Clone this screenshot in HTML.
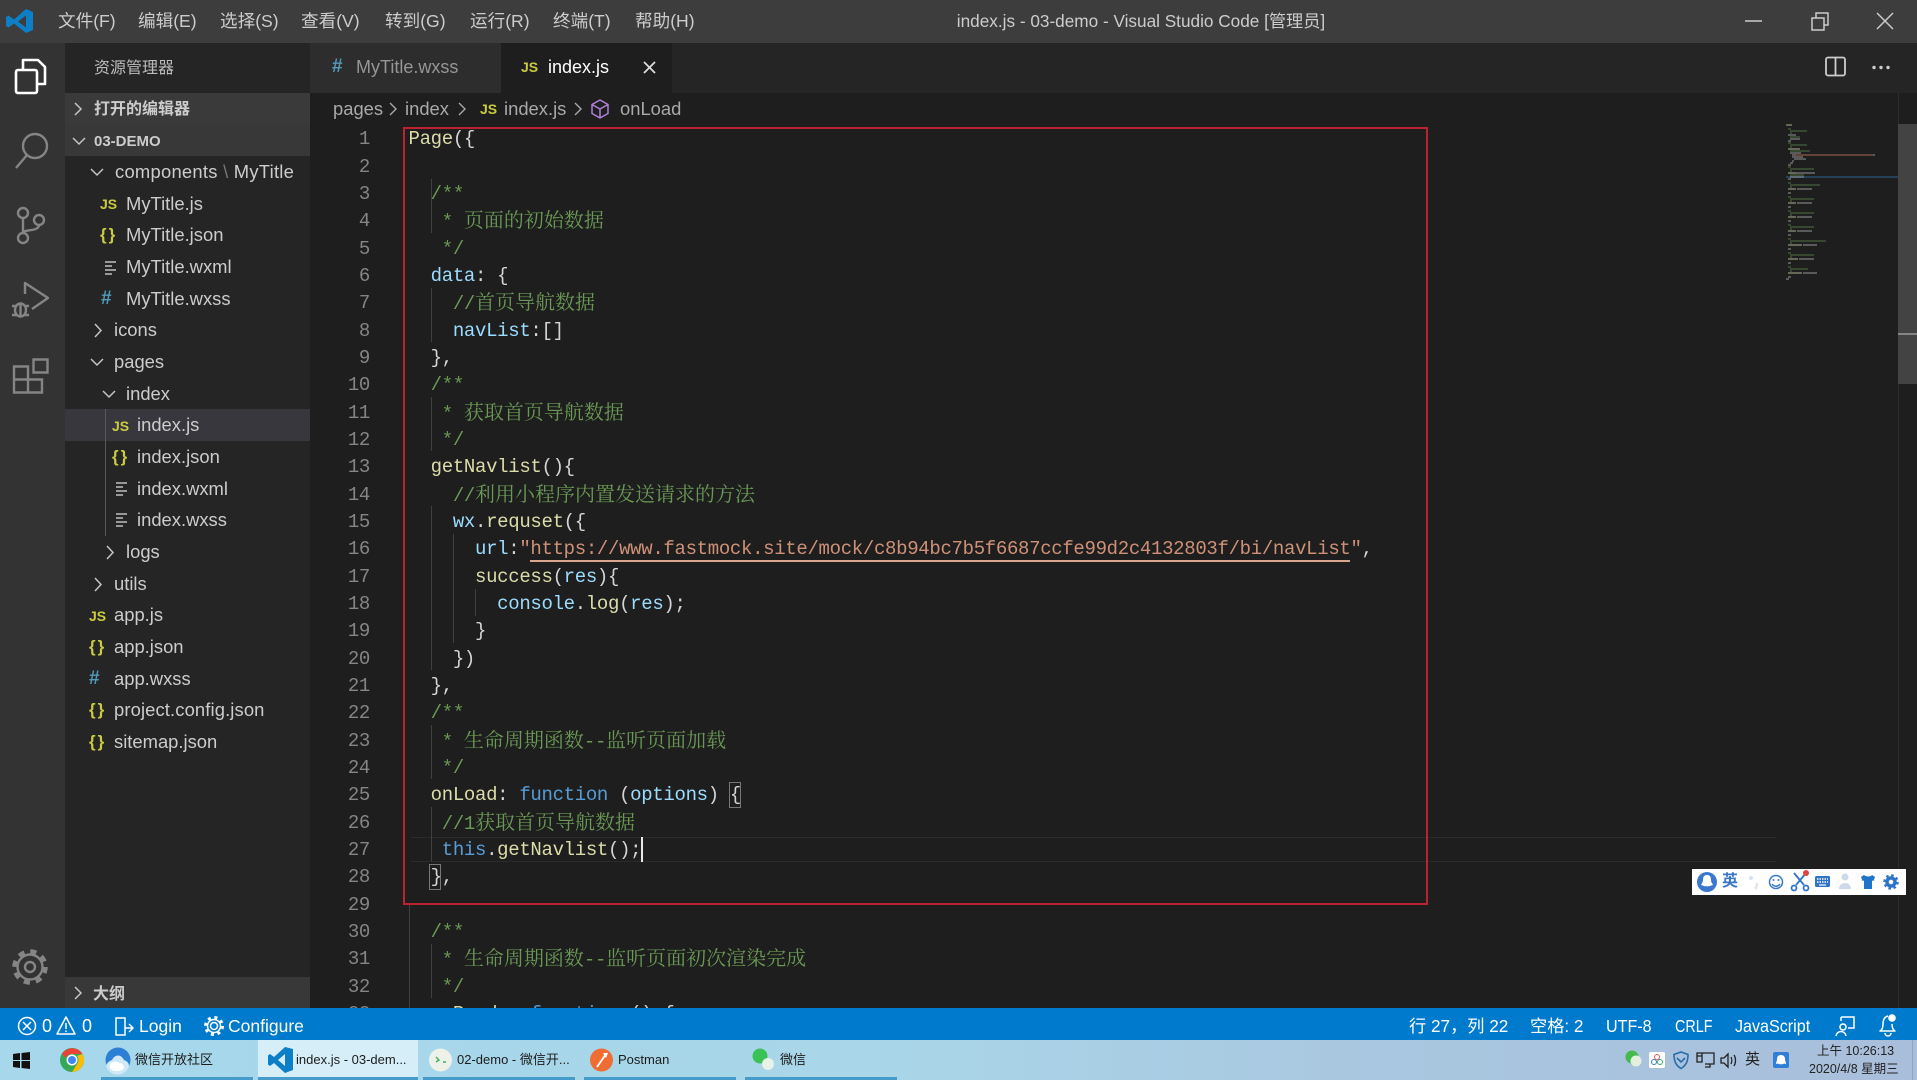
<!DOCTYPE html>
<html lang="zh"><head><meta charset="utf-8"><title>index.js - 03-demo - Visual Studio Code</title>
<style>
html,body{margin:0;padding:0;background:#1e1e1e}
#r{position:relative;width:1917px;height:1080px;overflow:hidden;font-family:"Liberation Sans","Noto Sans CJK SC",sans-serif;font-size:18px;color:#ccc}
.a{position:absolute}
.t{position:absolute;white-space:pre;height:24px;line-height:24px}
.tr{font-size:18.4px}
.m{color:#ccc;top:9px;font-size:17.6px}
.n{position:absolute;left:330px;width:40px;text-align:right;color:#858585;font:19px/27px "Liberation Mono",monospace;letter-spacing:-.32px;margin-top:2px}
.l{position:absolute;left:408.5px;white-space:pre;color:#d4d4d4;font:19px/27px "Liberation Mono","Noto Serif CJK SC",monospace;letter-spacing:-.32px;margin-top:2px}
.q{margin-top:-1px}
.y{color:#dcdcaa}.b{color:#9cdcfe}.k{color:#569cd6}.c{color:#6a9955}.s{color:#ce9178}
.z{font-size:20px;letter-spacing:0;font-family:"Noto Serif CJK SC",serif}
.i{position:absolute;font-weight:bold;font-size:14px;line-height:24px;height:24px;white-space:pre}
.js{color:#cbcb41}.cu{color:#cbcb41;font-size:17px;letter-spacing:2px}.h{color:#519aba;font-size:19px}
.w{color:#fff;top:1014px}
.k2{color:#1c1c1c;font-size:13px;top:1048px}
.g{position:absolute;width:1px;background:#404040}
</style></head><body><div id="r">
<!-- base areas -->
<div class="a" style="left:0;top:0;width:1917px;height:43px;background:#3d3d3d"></div>
<div class="a" style="left:0;top:43px;width:65px;height:965px;background:#333"></div>
<div class="a" style="left:65px;top:43px;width:245px;height:965px;background:#252526"></div>
<div class="a" style="left:310px;top:43px;width:1607px;height:50px;background:#252526"></div>
<div class="a" style="left:310px;top:43px;width:191px;height:50px;background:#2d2d2d"></div>
<div class="a" style="left:501px;top:43px;width:171px;height:50px;background:#1e1e1e"></div>
<div class="a" style="left:65px;top:93px;width:245px;height:32px;background:#3a3a3a"></div>
<div class="a" style="left:65px;top:125px;width:245px;height:31px;background:#383838"></div>
<div class="a" style="left:65px;top:977px;width:245px;height:31px;background:#383838"></div>
<div class="a" style="left:65px;top:409px;width:245px;height:32px;background:#37373d"></div>
<div class="a" style="left:105px;top:409px;width:1px;height:127px;background:#585858"></div>
<!-- menu -->
<div class="t m" style="left:58px">文件(F)</div><div class="t m" style="left:138px">编辑(E)</div><div class="t m" style="left:220px">选择(S)</div><div class="t m" style="left:301px">查看(V)</div><div class="t m" style="left:385px">转到(G)</div><div class="t m" style="left:470px">运行(R)</div><div class="t m" style="left:553px">终端(T)</div><div class="t m" style="left:635px">帮助(H)</div>
<div class="t" style="left:841px;width:600px;text-align:center;top:9px;color:#ccc;font-size:17.2px">index.js - 03-demo - Visual Studio Code [管理员]</div>
<!-- sidebar -->
<div class="t" style="left:94px;top:57px;font-size:16px;color:#bbb">资源管理器</div>
<div class="t" style="left:94px;top:98px;font-size:16px;font-weight:bold;color:#ccc">打开的编辑器</div>
<div class="t" style="left:94px;top:130px;font-size:15px;font-weight:bold;color:#ccc">03-DEMO</div>
<div class="t" style="left:93px;top:983px;font-size:16px;font-weight:bold;color:#ccc">大纲</div>
<div class="t tr" style="left:115px;top:160px;letter-spacing:.25px">components <span style="color:#777">\</span> MyTitle</div>
<div class="t tr" style="left:126px;top:192px">MyTitle.js</div>
<div class="t tr" style="left:126px;top:223px">MyTitle.json</div>
<div class="t tr" style="left:126px;top:255px">MyTitle.wxml</div>
<div class="t tr" style="left:126px;top:287px">MyTitle.wxss</div>
<div class="t tr" style="left:114px;top:318px">icons</div>
<div class="t tr" style="left:114px;top:350px">pages</div>
<div class="t tr" style="left:126px;top:382px">index</div>
<div class="t tr" style="left:137px;top:413px">index.js</div>
<div class="t tr" style="left:137px;top:445px">index.json</div>
<div class="t tr" style="left:137px;top:477px">index.wxml</div>
<div class="t tr" style="left:137px;top:508px">index.wxss</div>
<div class="t tr" style="left:126px;top:540px">logs</div>
<div class="t tr" style="left:114px;top:572px">utils</div>
<div class="t tr" style="left:114px;top:603px">app.js</div>
<div class="t tr" style="left:114px;top:635px">app.json</div>
<div class="t tr" style="left:114px;top:667px">app.wxss</div>
<div class="t tr" style="left:114px;top:698px;letter-spacing:.12px">project.config.json</div>
<div class="t tr" style="left:114px;top:730px">sitemap.json</div>
<div class="i js" style="left:100px;top:192px">JS</div>
<div class="i cu" style="left:100px;top:223px">{}</div>
<div class="i h" style="left:101px;top:287px">#</div>
<div class="i js" style="left:112px;top:414px">JS</div>
<div class="i cu" style="left:112px;top:445px">{}</div>
<div class="i js" style="left:89px;top:604px">JS</div>
<div class="i cu" style="left:89px;top:635px">{}</div>
<div class="i h" style="left:89px;top:667px">#</div>
<div class="i cu" style="left:89px;top:698px">{}</div>
<div class="i cu" style="left:89px;top:730px">{}</div>
<!-- tabs -->
<div class="i h" style="left:332px;top:55px">#</div>
<div class="t" style="left:356px;top:55px;color:#969696">MyTitle.wxss</div>
<div class="i js" style="left:521px;top:55px">JS</div>
<div class="t" style="left:548px;top:55px;color:#fff">index.js</div>
<!-- breadcrumbs -->
<div class="t tr" style="left:333px;top:97px;color:#a9a9a9">pages</div>
<div class="t tr" style="left:405px;top:97px;color:#a9a9a9">index</div>
<div class="i js" style="left:480px;top:97px">JS</div>
<div class="t tr" style="left:504px;top:97px;color:#a9a9a9">index.js</div>
<div class="t tr" style="left:620px;top:97px;color:#a9a9a9">onLoad</div>
<!-- current line -->
<div class="a" style="left:411px;top:837px;width:1365px;height:23px;border:1px solid #2b2b2b;border-left:0;border-right:0"></div>
<!-- indent guides -->
<div class="g" style="left:431px;top:179px;height:54px"></div>
<div class="g" style="left:431px;top:288px;height:54px"></div>
<div class="g" style="left:431px;top:397px;height:54px"></div>
<div class="g" style="left:431px;top:506px;height:164px"></div>
<div class="g" style="left:453px;top:534px;height:109px"></div>
<div class="g" style="left:475px;top:589px;height:27px"></div>
<div class="g" style="left:431px;top:725px;height:54px"></div>
<div class="g" style="left:431px;top:807px;height:54px"></div>
<div class="g" style="left:431px;top:944px;height:54px"></div>
<div class="g" style="left:409px;top:905px;height:103px"></div>
<!-- line numbers -->
<div class="n" style="top:124px">1</div><div class="n" style="top:152px">2</div><div class="n" style="top:179px">3</div><div class="n" style="top:206px">4</div><div class="n" style="top:234px">5</div><div class="n" style="top:261px">6</div><div class="n" style="top:288px">7</div><div class="n" style="top:316px">8</div><div class="n" style="top:343px">9</div><div class="n" style="top:370px">10</div><div class="n" style="top:398px">11</div><div class="n" style="top:425px">12</div><div class="n" style="top:452px">13</div><div class="n" style="top:480px">14</div><div class="n" style="top:507px">15</div><div class="n" style="top:534px">16</div><div class="n" style="top:562px">17</div><div class="n" style="top:589px">18</div><div class="n" style="top:616px">19</div><div class="n" style="top:644px">20</div><div class="n" style="top:671px">21</div><div class="n" style="top:698px">22</div><div class="n" style="top:726px">23</div><div class="n" style="top:753px">24</div><div class="n" style="top:780px">25</div><div class="n" style="top:808px">26</div><div class="n" style="top:835px">27</div><div class="n" style="top:862px">28</div><div class="n" style="top:890px">29</div><div class="n" style="top:917px">30</div><div class="n" style="top:944px">31</div><div class="n" style="top:972px">32</div><div class="n" style="top:999px">33</div>
<!-- code -->
<div class="l" style="top:124px"><span class="y">Page</span>({</div>
<div class="l c" style="top:179px">  /**</div>
<div class="l c q" style="top:206px">   * <span class="z">页面的初始数据</span></div>
<div class="l c" style="top:234px">   */</div>
<div class="l" style="top:261px">  <span class="b">data</span>: {</div>
<div class="l c q" style="top:288px">    //<span class="z">首页导航数据</span></div>
<div class="l" style="top:316px">    <span class="b">navList</span>:[]</div>
<div class="l" style="top:343px">  },</div>
<div class="l c" style="top:370px">  /**</div>
<div class="l c q" style="top:398px">   * <span class="z">获取首页导航数据</span></div>
<div class="l c" style="top:425px">   */</div>
<div class="l" style="top:452px">  <span class="y">getNavlist</span>(){</div>
<div class="l c q" style="top:480px">    //<span class="z">利用小程序内置发送请求的方法</span></div>
<div class="l" style="top:507px">    <span class="b">wx</span>.<span class="y">requset</span>({</div>
<div class="l" style="top:534px">      <span class="b">url</span>:<span class="s">"https://www.fastmock.site/mock/c8b94bc7b5f6687ccfe99d2c4132803f/bi/navList"</span>,</div>
<div class="l" style="top:562px">      <span class="y">success</span>(<span class="b">res</span>){</div>
<div class="l" style="top:589px">        <span class="b">console</span>.<span class="y">log</span>(<span class="b">res</span>);</div>
<div class="l" style="top:616px">      }</div>
<div class="l" style="top:644px">    })</div>
<div class="l" style="top:671px">  },</div>
<div class="l c" style="top:698px">  /**</div>
<div class="l c q" style="top:726px">   * <span class="z">生命周期函数</span>--<span class="z">监听页面加载</span></div>
<div class="l c" style="top:753px">   */</div>
<div class="l" style="top:780px">  <span class="y">onLoad</span>: <span class="k">function</span> (<span class="b">options</span>) {</div>
<div class="l c q" style="top:808px">   //1<span class="z">获取首页导航数据</span></div>
<div class="l" style="top:835px">   <span class="k">this</span>.<span class="y">getNavlist</span>();</div>
<div class="l" style="top:862px">  },</div>
<div class="l c" style="top:917px">  /**</div>
<div class="l c q" style="top:944px">   * <span class="z">生命周期函数</span>--<span class="z">监听页面初次渲染完成</span></div>
<div class="l c" style="top:972px">   */</div>
<div class="l" style="top:999px">  <span class="y">onReady</span>: <span class="k">function</span> () {</div>
<!-- underline, caret, bracket boxes -->
<div class="a" style="left:530px;top:560px;width:820px;height:2px;background:#d8a78e"></div>
<div class="a" style="left:641px;top:837px;width:2px;height:25px;background:#e8e8e8"></div>
<div class="a" style="left:729px;top:782px;width:10px;height:24px;border:1px solid #777"></div>
<div class="a" style="left:429px;top:864px;width:10px;height:24px;border:1px solid #777"></div>
<!-- red box -->
<div class="a" style="left:403px;top:127px;width:1025px;height:778px;box-sizing:border-box;border:2.5px solid #bd2230"></div>
<!-- scrollbar -->
<div class="a" style="left:1898px;top:93px;width:1px;height:915px;background:#2c2c2c"></div>
<div class="a" style="left:1898px;top:124px;width:19px;height:260px;background:#434343"></div>
<div class="a" style="left:1898px;top:333px;width:19px;height:2px;background:#858585"></div>
<div class="a" style="left:1786px;top:176px;width:112px;height:2px;background:#264057"></div>
<!-- IME bar -->
<div class="a" style="left:1692px;top:869px;width:214px;height:26px;background:#fff"></div>
<div class="t" style="left:1722px;top:870px;font-size:16px;font-weight:bold;color:#3b78c8">英</div>
<!-- status bar -->
<div class="a" style="left:0;top:1008px;width:1917px;height:32px;background:#007acc"></div>
<div class="t w" style="left:42px">0</div><div class="t w" style="left:82px">0</div>
<div class="t w" style="left:139px;font-size:17.5px">Login</div><div class="t w" style="left:228px;font-size:17.5px">Configure</div>
<div class="t w" style="left:1409px;font-size:17.2px">行 27，列 22</div>
<div class="t w" style="left:1530px;font-size:17.2px">空格: 2</div>
<div class="t w" style="left:1606px;font-size:17.5px;transform:scaleX(.92);transform-origin:0 50%">UTF-8</div>
<div class="t w" style="left:1675px;font-size:17.5px;transform:scaleX(.82);transform-origin:0 50%">CRLF</div>
<div class="t w" style="left:1735px;font-size:17.5px;transform:scaleX(.92);transform-origin:0 50%">JavaScript</div>
<!-- taskbar -->
<div class="a" style="left:0;top:1040px;width:1917px;height:40px;background:linear-gradient(90deg,#a6d7ea 0,#a9d6e9 45%,#a9c8e0 70%,#a9bedb 100%)"></div>
<div class="a" style="left:258px;top:1040px;width:160px;height:40px;background:#d6eef7"></div>
<div class="a" style="left:101px;top:1077px;width:152px;height:3px;background:#459cca"></div>
<div class="a" style="left:258px;top:1077px;width:160px;height:3px;background:#459cca"></div>
<div class="a" style="left:423px;top:1077px;width:152px;height:3px;background:#459cca"></div>
<div class="a" style="left:584px;top:1077px;width:152px;height:3px;background:#459cca"></div>
<div class="a" style="left:745px;top:1077px;width:152px;height:3px;background:#459cca"></div>
<div class="t k2" style="left:135px">微信开放社区</div>
<div class="t k2" style="left:296px">index.js - 03-dem...</div>
<div class="t k2" style="left:457px">02-demo - 微信开...</div>
<div class="t k2" style="left:618px">Postman</div>
<div class="t k2" style="left:780px">微信</div>
<div class="t" style="left:1817px;top:1039px;font-size:12.5px;color:#222">上午 10:26:13</div>
<div class="t" style="left:1809px;top:1057px;font-size:12.5px;color:#222">2020/4/8 星期三</div>
<div class="t" style="left:1745px;top:1048px;font-size:15px;color:#222">英</div>
<div class="a" style="left:1912px;top:1040px;width:1px;height:40px;background:#8fa6c0"></div>
<!-- icon overlay -->
<svg class="a" style="left:0;top:0" width="1917" height="1080" viewBox="0 0 1917 1080" fill="none">
<!-- vscode logo -->
<path fill="#0c7fc7" d="M26 9 14 19.500 8.500 15.500 6 17v9l2.500 1.500L14 23.500 26 33l7-3V12zM26 15.500 18 21.500l8 6z" fill-rule="evenodd"/>
<!-- window controls -->
<path stroke="#ccc" stroke-width="1.500" d="M1745 21h17M1812 18h12v12h-12zM1816 18v-5h12v12h-4M1877 13l16 16M1893 13l-16 16"/>
<!-- split, more, close tab -->
<path stroke="#ccc" stroke-width="1.800" d="M1826 59.500a2 2 0 0 1 2-2h15a2 2 0 0 1 2 2v14a2 2 0 0 1-2 2h-15a2 2 0 0 1-2-2zM1835.500 57.500v18"/>
<circle cx="1874" cy="67.500" r="1.700" fill="#ccc"/><circle cx="1881" cy="67.500" r="1.700" fill="#ccc"/><circle cx="1888" cy="67.500" r="1.700" fill="#ccc"/>
<path stroke="#ddd" stroke-width="1.800" d="M644 62l11 11M655 62l-11 11"/>
<!-- activity bar -->
<path stroke="#fff" stroke-width="2.600" stroke-linejoin="round" d="M23 69V60h15l7 7v17h-8M16 72a2 2 0 0 1 2-2h17a2 2 0 0 1 2 2v19a2 2 0 0 1-2 2H18a2 2 0 0 1-2-2z"/>
<g stroke="#858585" stroke-width="2.400">
<circle cx="35" cy="146" r="12"/><path d="M27 155 16 168"/>
<circle cx="23" cy="213" r="5"/><circle cx="23" cy="238" r="5"/><circle cx="39" cy="220" r="5"/><path d="M23 218v15M39 225c0 7-16 4-16 8"/>
<path stroke-linejoin="round" d="M25 294v-11l23 15-16 11M26 310a5.500 6.500 0 1 1-11 0a5.500 6.500 0 1 1 11 0M20.500 303v14M12 306h5M24 306h5M12 315h5M24 315h5"/>
<path d="M33.500 359.500h14v13h-14zM14 366.500h14v13h-14zM14 379.500h14v13h-14zM28 379.500h14v13h-14z"/>
<circle cx="30" cy="967" r="12.500"/><circle cx="30" cy="967" r="5"/>
<circle cx="30" cy="967" r="15.500" stroke-width="4.500" stroke-dasharray="6.200 6"/>
</g>
<!-- tree chevrons -->
<g stroke="#c5c5c5" stroke-width="1.500">
<path d="M75 103l6 6-6 6M73 138l6 6 6-6M91 169l6 6 6-6M95 324l6 6.500-6 6.500M91 359l6 6 6-6M103 391l6 6 6-6M107 546l6 6.500-6 6.500M95 578l6 6.500-6 6.500M75 987l6 6-6 6"/>
</g>
<!-- wxml line icons -->
<g stroke="#c0c0c0" stroke-width="1.600">
<path d="M105 262h11M105 266h7M105 270h11M105 274h7"/>
<path d="M116 483h11M116 487h7M116 491h11M116 495h7"/>
<path d="M116 514h11M116 518h7M116 522h11M116 526h7"/>
</g>
<!-- breadcrumbs separators and cube -->
<path stroke="#a9a9a9" stroke-width="1.400" d="M390 103l6 6-6 6M459 103l6 6-6 6M575 103l6 6-6 6"/>
<path stroke="#b180d7" stroke-width="1.500" stroke-linejoin="round" d="M600 100l8 4.500v9l-8 4.500-8-4.500v-9zM592 104.500l8 4.500 8-4.500M600 109v9"/>
<!-- minimap -->
<g stroke-width="1.300" opacity=".85">
<path stroke="#a8a88a" d="M1786 125h6M1788 149h12M1788 173h8M1788 189h8M1788 203h8M1788 217h8M1788 231h8M1788 245h14M1788 259h10M1788 273h14"/>
<path stroke="#4d7040" d="M1788 129h3M1790 131h17M1790 133h2M1790 137h10M1788 143h3M1790 145h17M1790 147h2M1790 151h20M1788 167h3M1790 169h24M1790 171h2M1790 175h14M1788 183h3M1790 185h30M1790 187h2M1788 197h3M1790 199h24M1790 201h2M1788 211h3M1790 213h24M1790 215h2M1788 225h3M1790 227h24M1790 229h2M1788 239h3M1790 241h36M1790 243h2M1788 253h3M1790 255h24M1790 257h2M1788 267h3M1790 269h18M1790 271h2"/>
<path stroke="#909090" d="M1788 135h8M1790 139h10M1788 141h3M1790 153h11M1792 155h4M1873 155h2M1792 157h11M1794 159h12M1792 161h2M1790 163h3M1788 165h3M1796 173h19M1790 177h14M1788 179h3M1797 189h15M1788 193h3M1797 203h15M1788 207h3M1797 217h15M1788 221h3M1797 231h15M1788 235h3M1803 245h14M1788 249h3M1799 259h15M1788 263h3M1803 273h14M1788 277h3M1786 279h3"/>
<path stroke="#a2634f" d="M1796 155h77"/>
</g>
<!-- status bar icons -->
<g stroke="#fff" stroke-width="1.500">
<circle cx="27" cy="1026" r="8.500"/><path d="M23 1022l8 8M31 1022l-8 8"/>
<path stroke-linejoin="round" d="M66 1017l9 17H57zM66 1023v6M66 1030.500v1.500"/>
<path d="M116 1018h9v17h-9zM125 1023v2M125 1028h8M129 1024l4 4-4 4"/>
<circle cx="214" cy="1026" r="3.500"/><circle cx="214" cy="1026" r="6.500"/><circle cx="214" cy="1026" r="8.500" stroke-width="3" stroke-dasharray="3 3.700"/>
<path d="M1841 1017h13v11h-6M1841 1017v4M1843 1024a3 3 0 1 0 .01 0M1836 1036c1-6 9-6 10 0"/>
<path stroke-linejoin="round" d="M1888 1016c-4 1-5 5-5 8s-1 6-3 7h15c-2-1-3-4-3-7M1885 1033a3 3 0 0 0 6 0"/>
</g>
<circle cx="1892" cy="1018" r="3.800" fill="#fff"/>
<!-- IME icons -->
<circle cx="1707" cy="882" r="10" fill="#3a78d0"/><path fill="#fff" d="M1707 875c-3 0-4 2-4 5 0 2-1 3-2 5l2 .5c1 1 7 1 8 0l2-.5c-1-2-2-3-2-5 0-3-1-5-4-5z"/>
<circle cx="1751" cy="878" r="2" fill="#d8e2f0"/><path stroke="#e1e6f0" stroke-width="2.500" d="M1757 883c0 4-1 5-2 6"/>
<g stroke="#3a78c8" stroke-width="1.500"><circle cx="1776" cy="882" r="6.500"/><path d="M1772 884c2 3 6 3 8 0"/></g><circle cx="1773.500" cy="880" r="1" fill="#3a78c8"/><circle cx="1778.500" cy="880" r="1" fill="#3a78c8"/>
<g stroke="#2f74c6" stroke-width="1.800"><path d="M1794 873l10 12M1806 873l-10 12"/><circle cx="1794" cy="888" r="2.500"/><circle cx="1806" cy="888" r="2.500"/></g><circle cx="1806" cy="873" r="3" fill="#e0443a"/>
<rect x="1815" y="876" width="15" height="11" rx="1.500" fill="#2f74c6"/><path stroke="#fff" stroke-width="1.500" stroke-dasharray="1.500 1" d="M1817 879h11M1817 882h11"/><path stroke="#fff" stroke-width="1.200" d="M1819 885h7"/>
<circle cx="1845" cy="877" r="3.500" fill="#cdd9ea"/><path fill="#cdd9ea" d="M1839 889c0-8 12-8 12 0z"/>
<path fill="#1f73c9" d="M1864 875l-3 2 1.500 4 1.500-.5V889h8v-8.500l1.500.5 1.500-4-3-2c-1 2-6 2-8 0z"/>
<circle cx="1891" cy="882" r="4" stroke="#2f74c6" stroke-width="3.500"/><circle cx="1891" cy="882" r="6.500" stroke="#2f74c6" stroke-width="2.500" stroke-dasharray="2.500 2.600"/>
<!-- taskbar icons -->
<path fill="#111" d="M13 1054l7-1v7h-7zM21.500 1053l8.500-1v8h-8.500zM13 1061h7v7l-7-1zM21.500 1061h8.500v8l-8.500-1z"/>
<circle cx="72" cy="1060" r="12" fill="#34a853"/><path fill="#ea4335" d="M62 1054a12 12 0 0 1 20.500 0H72a6 6 0 0 0-6 4z"/><path fill="#fbbc05" d="M82.500 1054a12 12 0 0 1-10.500 18l5-8a6 6 0 0 0 0-8z"/><circle cx="72" cy="1060" r="5.500" fill="#fff"/><circle cx="72" cy="1060" r="4" fill="#4285f4"/>
<circle cx="118" cy="1060" r="12.500" fill="#2d7fd6"/><path fill="#cfe9f7" d="M112 1060c3-6 9-6 12 0 3 1 5 3 5 6a12 12 0 0 1-23 0c1-3 3-5 6-6z"/><path fill="#fff" d="M116 1071c-5 0-8-4-5-8 3-2 6-2 8 0 3 0 5 2 5 5-2 3-5 3-8 3z"/>
<path fill="#0c7fc7" d="M285 1047 274 1057l-4-3-2 1.500v9l2 1.500 4-3 11 10 8-3v-21zM285 1054 278 1060l7 6z" fill-rule="evenodd"/>
<circle cx="440.500" cy="1060" r="11.500" fill="#edf1ea"/><path stroke="#3fae5b" stroke-width="1.400" d="M436 1057l3 3-3 2M443 1062h3"/>
<circle cx="601.500" cy="1060" r="11.500" fill="#ef6c33"/><path stroke="#fff" stroke-width="1.800" d="M597 1067l9-13"/><path fill="#fff" d="M603 1053l5 0-2 5z"/>
<circle cx="760" cy="1056" r="7.500" fill="#3bc256"/><circle cx="768" cy="1064" r="6" fill="#e8f2e8"/>
<!-- tray icons -->
<circle cx="1632" cy="1057" r="6.500" fill="#43b94e"/><circle cx="1636" cy="1061" r="5.500" fill="#e3efdf"/>
<rect x="1649" y="1052" width="16" height="16" rx="2" fill="#fff"/><circle cx="1657" cy="1057" r="2.500" stroke="#e45b5b"/><circle cx="1654" cy="1062" r="2.500" stroke="#3a78c8"/><circle cx="1660" cy="1062" r="2.500" stroke="#3aa76d"/>
<path stroke="#2a6ea8" stroke-width="1.600" d="M1681 1052l7 2.500c0 7-2 11-7 14-5-3-7-7-7-14zM1677 1058l4 4 4-4"/>
<path stroke="#222" stroke-width="1.300" d="M1702 1053h12v11h-9M1710 1064v3h-5M1697 1053h5v9h-5zM1697 1056h5"/>
<path stroke="#222" stroke-width="1.300" d="M1721 1058h3l4-4v13l-4-4h-3zM1731 1057c1 2 1 5 0 7M1734 1055c2 3 2 8 0 11"/>
<rect x="1773" y="1052" width="16" height="16" rx="2" fill="#2f7fd6"/><path fill="#fff" d="M1781 1055c-3 0-4 2-4 4s-1 3-1 5l2-.5c1 1 5 1 6 0l2 .5c0-2-1-3-1-5s-1-4-4-4z"/>
</svg>
</div></body></html>
